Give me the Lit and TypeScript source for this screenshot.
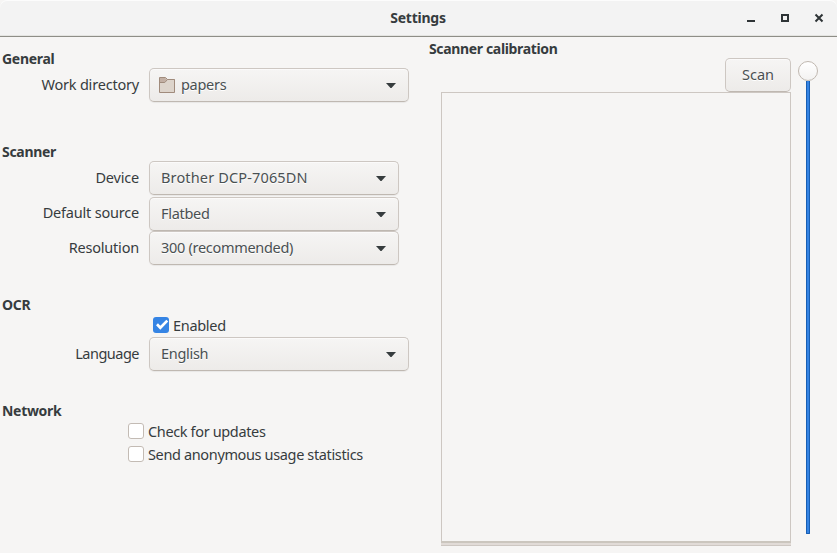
import { LitElement, html, css, svg, nothing } from "lit";
import { customElement, property } from "lit/decorators.js";

@customElement("drop-down")
class DropDown extends LitElement {
  @property() label = "";
  @property({ type: Boolean }) folder = false;

  static styles = css`
    :host {
      display: flex;
      align-items: center;
      box-sizing: border-box;
      height: 34px;
      padding: 0 12px 0 11px;
      border: 1px solid #cdc7c2;
      border-bottom-color: #bfb8b1;
      border-radius: 5px;
      background: linear-gradient(#f6f5f4, #edebe9);
      box-shadow: inset 0 1px #fbfafa, 0 1px 1px rgba(0, 0, 0, 0.06);
      color: #4a5052;
      text-shadow: 0 1px #fff;
      white-space: nowrap;
    }
    .folder { width: 16px; height: 16px; margin: 0 6px 0 -2px; flex: none; }
    .text { flex: 1; padding-bottom: 2px; }
    .arrow { width: 10px; height: 5px; flex: none; margin-top: 1px; }
  `;

  render() {
    return html`
      ${this.folder
        ? svg`<svg class="folder" viewBox="0 0 16 16"><path d="M.5 15.500V.5h6l2 2h7v13z" fill="#ddd4cb" stroke="#a08b7c"/><path d="M1 1h5.300l1.700 1.700L5.800 5H1z" fill="#c2afa3"/><path d="M.5 5.500h5.300l2.700-3h7" fill="none" stroke="#a08b7c"/></svg>`
        : nothing}
      <span class="text">${this.label}</span>
      <svg class="arrow" viewBox="0 0 10 5"><path d="M0 0h10L5.500 5h-1z" fill="#363c3e" /></svg>
    `;
  }
}

@customElement("check-option")
class CheckOption extends LitElement {
  @property() label = "";
  @property({ type: Boolean }) checked = false;

  static styles = css`
    :host { display: flex; align-items: center; gap: 4px; white-space: nowrap; }
    svg { width: 16px; height: 16px; flex: none; }
  `;

  render() {
    return html`
      <svg viewBox="0 0 16 16">
        ${this.checked
          ? svg`<rect width="16" height="16" rx="3" fill="#3584e4"/><path d="M4 7.300l3.300 3.400L14.300 3.600" fill="none" stroke="#fff" stroke-width="2.700"/>`
          : svg`<rect x=".5" y=".5" width="15" height="15" rx="2.500" fill="#fff" stroke="#c3bbb4"/>`}
      </svg>
      <span>${this.label}</span>
    `;
  }
}

@customElement("app-root")
class AppRoot extends LitElement {
  static styles = css`
    :host {
      display: flex;
      flex-direction: column;
      box-sizing: border-box;
      width: 837px;
      height: 553px;
      overflow: hidden;
      background: #f6f5f4;
      color: #363c3e;
      font: 14.5px/20px "Noto Sans", sans-serif;
      letter-spacing: -0.3px;
    }
    .titlebar {
      display: grid;
      grid-template-columns: 1fr auto 1fr;
      align-items: center;
      box-sizing: border-box;
      height: 37px;
      flex: none;
      padding-right: 12px;
      border-bottom: 1px solid #8e8e87;
      border-radius: 7px 7px 0 0;
      background: #f3f3f3;
      box-shadow: inset 0 1px #fcfcfc, inset 0 -1px #e4e4e1;
    }
    .title { grid-column: 2; font-size: 14px; font-weight: 700; padding-left: 11px; letter-spacing: -0.25px; }
    .controls { display: flex; justify-content: flex-end; gap: 22px; }
    .controls svg { width: 12px; height: 12px; }
    .content { display: flex; flex: 1; }
    .left { width: 429px; }
    .right { width: 408px; }
    h2 { margin: 0; font-size: 14px; line-height: 20px; font-weight: 700; letter-spacing: -0.3px; }
    .left h2 { padding-left: 2px; }
    .right h2 { height: 21px; line-height: 24px; letter-spacing: -0.35px; }
    .general { height: 81px; padding-top: 12px; }
    .scanner { height: 141px; padding-top: 12px; }
    .ocr { height: 94px; padding-top: 12px; }
    .network { padding-top: 12px; }
    .network h2 { height: 18px; }
    .row {
      display: grid;
      grid-template-columns: 139px 260px;
      column-gap: 10px;
      align-items: center;
      height: 34px;
    }
    .general h2, .scanner h2 { height: 19px; }
    .label { text-align: right; padding-bottom: 2px; letter-spacing: -0.2px; }
    .raised { padding-bottom: 4px; }
    .tight { letter-spacing: -0.5px; }
    .model { letter-spacing: 0.15px; }
    .narrow { grid-template-columns: 139px 250px; }
    .spaced { margin-bottom: 2px; }
    .enabled { margin: 0 0 2px 153px; height: 20px; }
    .option { margin-left: 128px; height: 23px; letter-spacing: -0.36px; }
    .tools { display: flex; }
    .preview { width: 350px; margin-left: 12px; }
    .bar { display: flex; justify-content: flex-end; }
    .scan {
      box-sizing: border-box;
      width: 66px;
      height: 34px;
      padding: 0 0 2px;
      border: 1px solid #cdc7c2;
      border-bottom-color: #bfb8b1;
      border-radius: 5px;
      background: linear-gradient(#f6f5f4, #edebe9);
      box-shadow: inset 0 1px #fbfafa;
      color: #4a5052;
      font: inherit;
      letter-spacing: 0;
      text-shadow: 0 1px #fff;
    }
    .frame { box-sizing: border-box; height: 451px; border: 1px solid #cdc7c2; border-bottom-width: 2px; border-bottom-color: #cbc6be; }
    .trough { box-sizing: border-box; height: 3px; background: #e1dbd7; border-bottom: 1px solid #cdc7c2; }
    .slider { display: flex; flex-direction: column; align-items: center; width: 20px; margin: 3px 0 0 7px; }
    .knob { box-sizing: border-box; width: 20px; height: 20px; border: 1px solid #c0b8b0; border-radius: 50%; background: linear-gradient(#fff, #f3f2f1); flex: none; }
    .track { box-sizing: border-box; width: 4px; height: 453px; border: 1px solid #185fb4; border-top: 0; background: #3584e4; border-radius: 0 0 1px 1px; }
  `;

  render() {
    return html`
      <header class="titlebar">
        <span class="title">Settings</span>
        <div class="controls">
          <svg viewBox="0 0 12 12"><path d="M2 8h8v2H2z" fill="#2e3436" /></svg>
          <svg viewBox="0 0 12 12"><path d="M3 3h6v6H3z" fill="none" stroke="#2e3436" stroke-width="2" /></svg>
          <svg viewBox="0 0 12 12"><path d="M2.500 2.500l7 7M9.500 2.500l-7 7" stroke="#2e3436" stroke-width="2" /></svg>
        </div>
      </header>
      <main class="content">
        <div class="left">
          <section class="general">
            <h2>General</h2>
            <div class="row"><span class="label">Work directory</span><drop-down label="papers" folder></drop-down></div>
          </section>
          <section class="scanner">
            <h2>Scanner</h2>
            <div class="row narrow spaced"><span class="label">Device</span><drop-down class="model" label="Brother DCP-7065DN"></drop-down></div>
            <div class="row narrow"><span class="label raised">Default source</span><drop-down label="Flatbed"></drop-down></div>
            <div class="row narrow"><span class="label">Resolution</span><drop-down label="300 (recommended)"></drop-down></div>
          </section>
          <section class="ocr">
            <h2>OCR</h2>
            <check-option class="enabled" label="Enabled" checked></check-option>
            <div class="row"><span class="label tight">Language</span><drop-down label="English"></drop-down></div>
          </section>
          <section class="network">
            <h2>Network</h2>
            <check-option class="option" label="Check for updates"></check-option>
            <check-option class="option" label="Send anonymous usage statistics"></check-option>
          </section>
        </div>
        <section class="right">
          <h2>Scanner calibration</h2>
          <div class="tools">
            <div class="preview">
              <div class="bar"><button class="scan">Scan</button></div>
              <div class="frame"></div>
              <div class="trough"></div>
            </div>
            <div class="slider"><div class="knob"></div><div class="track"></div></div>
          </div>
        </section>
      </main>
    `;
  }
}
